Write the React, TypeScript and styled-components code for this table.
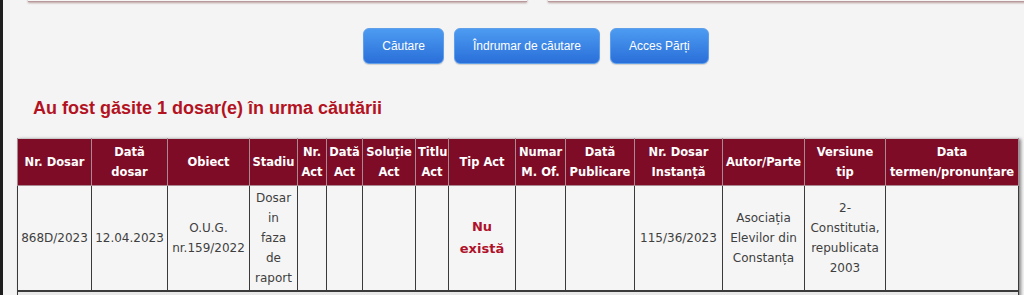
import React from 'react';
import styled, { createGlobalStyle } from 'styled-components';

const GlobalStyle = createGlobalStyle`
  html, body {
    margin: 0;
    padding: 0;
    background: #f4f4f4;
    overflow: hidden;
  }
`;

const columns = [74, 76, 82, 48, 29, 36, 53, 33, 67, 50, 69, 88, 82, 81, 133];

const headers: React.ReactNode[] = [
  'Nr. Dosar',
  <>Dată<br />dosar</>,
  'Obiect',
  'Stadiu',
  <>Nr.<br />Act</>,
  <>Dată<br />Act</>,
  <>Soluție<br />Act</>,
  <>Titlu<br />Act</>,
  'Tip Act',
  <>Numar<br />M. Of.</>,
  <>Dată<br />Publicare</>,
  <>Nr. Dosar<br />Instanță</>,
  'Autor/Parte',
  <>Versiune<br />tip</>,
  <>Data<br />termen/pronunțare</>,
];

export default function App() {
  return (
    <Page>
      <GlobalStyle />
      <Panels>
        <Panel />
        <Panel $wide />
      </Panels>

      <Buttons>
        <Button>Căutare</Button>
        <Button>Îndrumar de căutare</Button>
        <Button>Acces Părți</Button>
      </Buttons>

      <Title>Au fost găsite 1 dosar(e) în urma căutării</Title>

      <Results>
        <colgroup>
          {columns.map((w, i) => (
            <col key={i} style={{ width: w }} />
          ))}
        </colgroup>
        <thead>
          <tr>
            {headers.map((h, i) => (
              <Th key={i}>{h}</Th>
            ))}
          </tr>
        </thead>
        <tbody>
          <tr>
            <Td>868D/2023</Td>
            <Td>12.04.2023</Td>
            <Td>O.U.G. nr.159/2022</Td>
            <Td $tight>Dosar in faza de raport</Td>
            <Td />
            <Td />
            <Td />
            <Td />
            <Td>
              <Missing>Nu există</Missing>
            </Td>
            <Td />
            <Td />
            <Td>115/36/2023</Td>
            <Td>Asociația Elevilor din Constanța</Td>
            <Td>2-Constitutia, republicata 2003</Td>
            <Td />
          </tr>
          <FooterRow>
            <td colSpan={15} />
          </FooterRow>
        </tbody>
      </Results>
    </Page>
  );
}

const Page = styled.div`
  min-height: 295px;
  border-left: 3px solid #1e1e1e;
  background: #f4f4f4;
  padding-left: 14px;
  font-family: 'DejaVu Sans', Verdana, sans-serif;
`;

const Panels = styled.div`
  display: flex;
  gap: 21px;
  margin-left: 11px;
  margin-right: -40px;
  margin-top: -20px;
`;

const Panel = styled.div<{ $wide?: boolean }>`
  height: 21px;
  flex: ${(p) => (p.$wide ? '1' : '0 0 499px')};
  background: #f6f6f6;
  border-bottom: 1px solid #b89a9c;
  box-shadow: 0 1px 2px rgba(120, 60, 60, 0.45);
`;

const Buttons = styled.div`
  display: flex;
  justify-content: center;
  gap: 10px;
  margin-top: 26px;
  padding-left: 31px;
`;

const Button = styled.button`
  height: 36px;
  padding: 0 18px;
  border: 1px solid #5f9ee8;
  border-radius: 6px;
  background: linear-gradient(#4c9bf1, #2a6fd9);
  color: #fff;
  font-family: 'Liberation Sans', Arial, sans-serif;
  font-size: 12px;
  box-shadow: 0 1px 1px rgba(0, 0, 0, 0.15);
`;

const Title = styled.h2`
  margin: 34px 0 0 16px;
  font-family: 'Liberation Sans', Arial, sans-serif;
  font-size: 18px;
  line-height: 21px;
  font-weight: bold;
  color: #b3121f;
`;

const Results = styled.table`
  margin-top: 19px;
  width: 1001px;
  table-layout: fixed;
  border-collapse: collapse;
  border-top: 1px solid #c8c8c8;
  box-shadow: 2px 1px 3px rgba(0, 0, 0, 0.45);
`;

const Th = styled.th`
  height: 46px;
  padding: 0 2px;
  background: #7f0c27;
  color: #fff;
  font-size: 11.5px;
  line-height: 20px;
  font-weight: bold;
  text-align: center;
  border: 1px solid #a98a92;
  border-top: none;
`;

const Td = styled.td<{ $tight?: boolean }>`
  height: 104px;
  padding: 0 ${(p) => (p.$tight ? '4px' : '3px')};
  background: #f5f5f5;
  color: #3f3f3f;
  font-size: 12px;
  line-height: 20px;
  text-align: center;
  vertical-align: middle;
  border: 1px solid #3a3a3a;
`;

const Missing = styled.span`
  color: #b0112a;
  font-size: 13px;
  font-weight: bold;
  line-height: 22px;
`;

const FooterRow = styled.tr`
  td {
    height: 12px;
    background: #e8e8e8;
    border: 1px solid #3a3a3a;
    border-top-width: 2px;
  }
`;
